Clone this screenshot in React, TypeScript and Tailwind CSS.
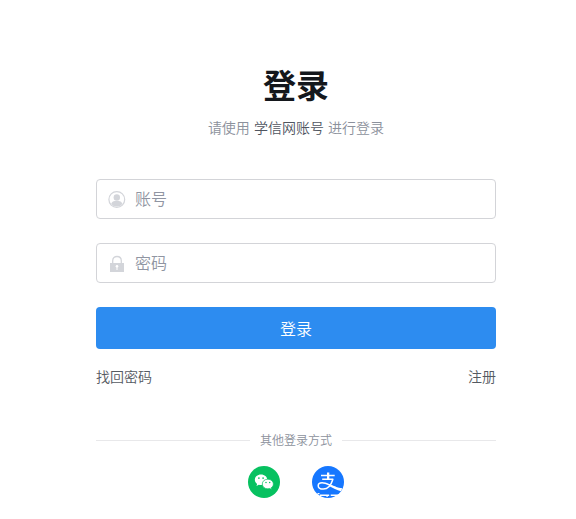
import type { ReactNode } from "react";

function UserIcon() {
    return (
        <svg viewBox="0 0 18 18" className="size-[18px]" fill="none">
            <circle cx="8.800" cy="9.500" r="7.900" stroke="#d3d5da" strokeWidth="1.200" />
            <circle cx="8.800" cy="7.500" r="3.200" fill="#d3d5da" />
            <path d="M3.200 14c.5-1.900 2-2.900 3.600-2.900h4c1.600 0 3.100 1 3.600 2.900a7 7 0 0 1-5.600 2.500A7 7 0 0 1 3.200 14z" fill="#d3d5da" />
        </svg>
    );
}

function LockIcon() {
    return (
        <svg viewBox="0 0 18 18" className="size-[18px]" fill="none">
            <path d="M4.700 9.500V6.700C4.700 3.900 6.600 2.500 9 2.500s4.300 1.400 4.300 4.200v2.800" stroke="#d3d5da" strokeWidth="1.300" />
            <path d="M2 9h14v9H2z" fill="#d3d5da" />
            <circle cx="9" cy="12.300" r="1.300" fill="#fff" />
            <path d="M8.500 12.500h1V16h-1z" fill="#fff" />
        </svg>
    );
}

function WechatIcon() {
    return (
        <svg viewBox="0 0 32 32" className="size-8">
            <circle cx="16" cy="16" r="16" fill="#07c160" />
            <path d="M13 8.600C9.500 8.600 6.800 10.900 6.800 13.800c0 1.700.9 3.100 2.300 4.100l-.6 2 2.300-1.200c.8.200 1.500.3 2.300.3 3.500 0 6.200-2.300 6.200-5.200S16.500 8.600 13 8.600z" fill="#fff" />
            <path d="M19.800 13.200c-3.200 0-5.500 2.100-5.500 4.800s2.300 4.800 5.500 4.800c.7 0 1.300-.1 1.900-.3l2 1-.5-1.700c1.300-.8 2.200-2.200 2.200-3.800 0-2.700-2.400-4.800-5.600-4.800z" fill="#fff" stroke="#07c160" strokeWidth=".7" />
            <circle cx="10.900" cy="12.100" r=".85" fill="#07c160" />
            <circle cx="15.100" cy="12.100" r=".85" fill="#07c160" />
            <circle cx="18" cy="16.600" r=".75" fill="#07c160" />
            <circle cx="21.700" cy="16.600" r=".75" fill="#07c160" />
        </svg>
    );
}

function AlipayIcon() {
    return (
        <svg viewBox="0 0 32 32" className="size-8" fill="none">
            <circle cx="16" cy="16" r="16" fill="#1677ff" />
            <path d="M15 6.500h2.300v6H15zM9 8.800h13.700v1.400H9zM10.200 12.600h11.100V14H10.200z" fill="#fff" />
            <path d="M20.900 13.200c-1.500 4.900-4.600 9.900-9.500 9.900-3 0-5.200-1.200-5.200-3.400 0-1.800 1.600-2.900 3.900-2.900 2.600 0 5.400 1.300 8.100 2.500l5.800 2.500" stroke="#fff" strokeWidth="1.500" />
            <path d="M17 18.400c4.300 1.900 8.700 3.100 13.300 3.900L29 25.300c-4.200-1.300-8-2.900-12-5.200z" fill="#fff" />
            <path d="M5.500 27h2v1.200h-2zM8 28.500h9.200v1.400H8zM14.500 29.500h1.200V31h-1.200zM18.700 28.500h9.100l-1.400 1.400h-7.700z" fill="#fff" />
        </svg>
    );
}

function Field({ icon, label, type }: { icon: ReactNode; label: string; type: string }) {
    return (
        <label className="flex h-10 items-center gap-[9px] rounded border border-[#d3d4d8] pl-[11px] pr-3">
            {icon}
            <input type={type} placeholder={label} className="min-w-0 flex-1 pb-0.5 text-base text-[#222] outline-none placeholder:text-[#9095a2]" />
        </label>
    );
}

export default function App() {
    return (
        <div className="h-[519px] overflow-hidden bg-white pl-24 pt-[60px] font-['Noto_Sans_CJK_SC',sans-serif] font-[350]">
            <div className="w-[400px]">
                <h1 className="text-center text-[33px] font-bold leading-[48px] text-[#14171c]">登录</h1>
                <p className="mt-2 text-center text-sm leading-[22px] text-[#8c919c] [word-spacing:1px]">
                    请使用 <span className="text-[#50555f]">学信网账号</span> 进行登录
                </p>

                <form className="mt-[41px] flex flex-col gap-6">
                    <Field icon={<UserIcon />} label="账号" type="text" />
                    <Field icon={<LockIcon />} label="密码" type="password" />
                    <button type="button" className="h-[42px] rounded bg-[#2d8cf0] text-base text-white">登录</button>
                </form>

                <div className="mt-4 flex justify-between text-sm leading-[22px] text-[#555a62]">
                    <a href="#">找回密码</a>
                    <a href="#">注册</a>
                </div>

                <div className="mt-11 flex items-center gap-2.5 text-xs leading-[18px] text-[#8c919c]">
                    <span className="h-px flex-1 bg-[#e8e8ea]" />
                    <span>其他登录方式</span>
                    <span className="h-px flex-1 bg-[#e8e8ea]" />
                </div>
                <div className="mt-[17px] flex justify-center gap-8">
                    <a href="#" aria-label="微信"><WechatIcon /></a>
                    <a href="#" aria-label="支付宝"><AlipayIcon /></a>
                </div>
            </div>
        </div>
    );
}
